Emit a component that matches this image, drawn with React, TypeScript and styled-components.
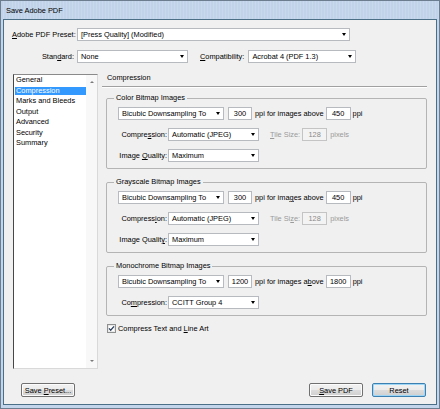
import React from "react";
import styled, { createGlobalStyle } from "styled-components";

const GlobalStyle = createGlobalStyle`
  html, body {
    margin: 0;
    padding: 0;
    background: #ffffff;
  }
  body {
    font-family: "Liberation Sans", Arial, sans-serif;
    font-size: 7.4px;
    color: #000;
  }
  * {
    box-sizing: border-box;
  }
`;

const sections = [
  "General",
  "Compression",
  "Marks and Bleeds",
  "Output",
  "Advanced",
  "Security",
  "Summary",
];

const App = () => {
  return (
    <>
      <GlobalStyle />
      <Window>
        <TitleBar>Save Adobe PDF</TitleBar>
        <Client>
          <TopRow>
            <FormLabel $w={62}>
              <U>A</U>dobe PDF Preset:
            </FormLabel>
            <Select $w={273}>[Press Quality] (Modified)</Select>
          </TopRow>
          <TopRow $mt={9}>
            <FormLabel $w={62}>
              Stan<U>d</U>ard:
            </FormLabel>
            <Select $w={111}>None</Select>
            <Txt $ml={9}>
              <U>C</U>ompatibility:
            </Txt>
            <Select $w={108} $ml={1}>
              Acrobat 4 (PDF 1.3)
            </Select>
          </TopRow>

          <Main>
            <ListBox>
              <ListItems>
                {sections.map((s) => (
                  <ListItem key={s} $selected={s === "Compression"}>
                    {s}
                  </ListItem>
                ))}
              </ListItems>
              <ScrollBar>
                <ScrollArrow />
                <ScrollArrow $down />
              </ScrollBar>
            </ListBox>

            <Panel>
              <PanelTitle>Compression</PanelTitle>
              <Separator />
              <Groups>
                <Group>
                  <Legend>Color Bitmap Images</Legend>
                  <SampleRow
                    ppi="300"
                    above="450"
                    aboveLabel={<>ppi for images above</>}
                  />
                  <FieldRow>
                    <RowLabel>
                      Compre<U>s</U>sion:
                    </RowLabel>
                    <Select $w={91}>Automatic (JPEG)</Select>
                    <TileSize label={<><U>T</U>ile Size:</>} />
                  </FieldRow>
                  <FieldRow>
                    <RowLabel>
                      Image <U>Q</U>uality:
                    </RowLabel>
                    <Select $w={91}>Maximum</Select>
                  </FieldRow>
                </Group>

                <Group>
                  <Legend>Grayscale Bitmap Images</Legend>
                  <SampleRow
                    ppi="300"
                    above="450"
                    aboveLabel={
                      <>
                        ppi for ima<U>g</U>es above
                      </>
                    }
                  />
                  <FieldRow>
                    <RowLabel>
                      Compress<U>i</U>on:
                    </RowLabel>
                    <Select $w={91}>Automatic (JPEG)</Select>
                    <TileSize label={<>Tile Si<U>z</U>e:</>} />
                  </FieldRow>
                  <FieldRow>
                    <RowLabel>
                      Image Qualit<U>y</U>:
                    </RowLabel>
                    <Select $w={91}>Maximum</Select>
                  </FieldRow>
                </Group>

                <Group>
                  <Legend>Monochrome Bitmap Images</Legend>
                  <SampleRow
                    ppi="1200"
                    above="1800"
                    aboveLabel={
                      <>
                        ppi for images a<U>b</U>ove
                      </>
                    }
                  />
                  <FieldRow>
                    <RowLabel>
                      Co<U>m</U>pression:
                    </RowLabel>
                    <Select $w={91}>CCITT Group 4</Select>
                  </FieldRow>
                </Group>
              </Groups>

              <CheckRow>
                <CheckBox />
                <span>
                  Compress Text and <U>L</U>ine Art
                </span>
              </CheckRow>
            </Panel>
          </Main>

          <Footer>
            <Button>
              Save <U>P</U>reset...
            </Button>
            <Spacer />
            <Button>
              <U>S</U>ave PDF
            </Button>
            <Button $focused>Reset</Button>
          </Footer>
        </Client>
      </Window>
    </>
  );
};

export default App;

type SampleRowProps = {
  ppi: string;
  above: string;
  aboveLabel: React.ReactNode;
};

// downsampling method + the two resolution fields
const SampleRow = ({ ppi, above, aboveLabel }: SampleRowProps) => (
  <FieldRow $indent>
    <Select $w={106}>Bicubic Downsampling To</Select>
    <Field $w={24} $ml={4}>
      {ppi}
    </Field>
    <Txt $ml={3}>{aboveLabel}</Txt>
    <Field $w={25} $ml={2}>
      {above}
    </Field>
    <Txt $ml={2}>ppi</Txt>
  </FieldRow>
);

const TileSize = ({ label }: { label: React.ReactNode }) => (
  <>
    <Txt $ml={11} $off>
      {label}
    </Txt>
    <Field $w={25} $ml={2} $off>
      128
    </Field>
    <Txt $ml={3} $off>
      pixels
    </Txt>
  </>
);

const CheckBox = () => (
  <svg width="9" height="9" viewBox="0 0 9 9">
    <rect x="0.5" y="0.5" width="8" height="8" fill="#f6f6f6" stroke="#8e8f8f" />
    <rect x="1.5" y="1.5" width="6" height="6" fill="#ffffff" stroke="#dedede" strokeWidth="0.6" />
    <path d="M2 4.4 L3.7 6.2 L7 2.4" fill="none" stroke="#2a3f5c" strokeWidth="1.3" />
  </svg>
);

const Window = styled.div`
  width: 440px;
  height: 409px;
  border: 1px solid #6c7d90;
  background: #c3d5ea;
  display: flex;
  flex-direction: column;
`;

const TitleBar = styled.div`
  height: 18px;
  padding-left: 5px;
  display: flex;
  align-items: center;
  background: repeating-linear-gradient(
    90deg,
    #c0d3e9 0,
    #c0d3e9 2px,
    #c8d9ed 2px,
    #c8d9ed 3px
  );
`;

const Client = styled.div`
  flex: 1;
  margin: 0 2px 3px;
  border: 1px solid #4b6f87;
  background: #f0f0f0;
  display: flex;
  flex-direction: column;
`;

const TopRow = styled.div<{ $mt?: number }>`
  display: flex;
  align-items: center;
  gap: 3px;
  margin: ${(p) => p.$mt ?? 8}px 0 0 8px;
`;

const FormLabel = styled.span<{ $w: number }>`
  width: ${(p) => p.$w}px;
  flex-shrink: 0;
  text-align: right;
  white-space: nowrap;
`;

const U = styled.span`
  text-decoration: underline;
`;

const Txt = styled.span<{ $ml?: number; $off?: boolean }>`
  margin-left: ${(p) => p.$ml ?? 0}px;
  white-space: nowrap;
  color: ${(p) => (p.$off ? "#9a9a9a" : "#000")};
`;

const Select = styled.div<{ $w: number; $ml?: number }>`
  position: relative;
  width: ${(p) => p.$w}px;
  height: 13px;
  margin-left: ${(p) => p.$ml ?? 0}px;
  flex-shrink: 0;
  padding-left: 3px;
  display: flex;
  align-items: center;
  white-space: nowrap;
  background: #ffffff;
  border: 1px solid #b7babf;

  &::after {
    content: "";
    position: absolute;
    right: 3px;
    top: 4px;
    border-left: 2.5px solid transparent;
    border-right: 2.5px solid transparent;
    border-top: 3px solid #000;
  }
`;

const Field = styled.div<{ $w: number; $ml?: number; $off?: boolean }>`
  width: ${(p) => p.$w}px;
  height: 13px;
  margin-left: ${(p) => p.$ml ?? 0}px;
  flex-shrink: 0;
  display: flex;
  align-items: center;
  justify-content: center;
  background: ${(p) => (p.$off ? "#f3f3f3" : "#ffffff")};
  border: 1px solid ${(p) => (p.$off ? "#c4c4c4" : "#b7babf")};
  color: ${(p) => (p.$off ? "#8a8a8a" : "#000")};
`;

const Main = styled.div`
  display: flex;
  height: 295px;
  margin-top: 11px;
`;

const ListBox = styled.div`
  width: 85px;
  height: 100%;
  margin-left: 9px;
  display: flex;
  background: #ffffff;
  border-style: solid;
  border-width: 1px;
  border-color: #8a8a8a #d9d9d9 #d9d9d9 #474747;
`;

const ListItems = styled.div`
  flex: 1;
  padding-top: 1px;
`;

const ListItem = styled.div<{ $selected?: boolean }>`
  height: 8.5px;
  line-height: 8.5px;
  margin: 0 0 2px 1px;
  padding-left: 1px;
  white-space: nowrap;
  background: ${(p) => (p.$selected ? "#3399ff" : "transparent")};
  color: ${(p) => (p.$selected ? "#ffffff" : "#000")};
`;

const ScrollBar = styled.div`
  width: 11px;
  display: flex;
  flex-direction: column;
  justify-content: space-between;
  align-items: center;
  padding: 6px 0;
  background: #f8f8f8;
`;

const ScrollArrow = styled.span<{ $down?: boolean }>`
  width: 0;
  height: 0;
  border-left: 2.5px solid transparent;
  border-right: 2.5px solid transparent;
  ${(p) =>
    p.$down ? "border-top: 2.5px solid #7a7a7a;" : "border-bottom: 2.5px solid #7a7a7a;"}
`;

const Panel = styled.div`
  width: 325px;
  margin-left: 4px;
  display: flex;
  flex-direction: column;
`;

const PanelTitle = styled.div`
  line-height: 8px;
  padding-left: 5px;
`;

const Separator = styled.div`
  margin-top: 4px;
  border-top: 1px solid #a0a0a0;
  border-bottom: 1px solid #ffffff;
`;

const Groups = styled.div`
  width: 321px;
  margin: 6px 0 0 4px;
`;

const Group = styled.fieldset`
  margin: 0;
  min-width: 0;
  padding: 5px 0 6px;
  border: 1px solid #b4b4b4;
  border-radius: 2px;

  & + & {
    margin-top: 9px;
  }
`;

const Legend = styled.legend`
  margin-left: 7px;
  padding: 0 2px;
  line-height: 8px;
  font-size: 7.4px;
`;

const FieldRow = styled.div<{ $indent?: boolean }>`
  display: flex;
  align-items: center;
  height: 13px;
  padding-left: ${(p) => (p.$indent ? 11 : 0)}px;

  & + & {
    margin-top: 8px;
  }
`;

const RowLabel = styled.span`
  width: 60px;
  margin-right: 1px;
  flex-shrink: 0;
  text-align: right;
  white-space: nowrap;
`;

const CheckRow = styled.label`
  display: flex;
  align-items: center;
  gap: 2px;
  margin: 8px 0 0 5px;
`;

const Footer = styled.div`
  display: flex;
  align-items: center;
  gap: 9px;
  margin-top: 14px;
  padding: 0 10px 0 17px;
`;

const Spacer = styled.div`
  flex: 1;
`;

const Button = styled.button<{ $focused?: boolean }>`
  width: 54px;
  height: 14px;
  padding: 0;
  font-family: inherit;
  font-size: 7.4px;
  color: #000;
  border: 1px solid ${(p) => (p.$focused ? "#3c7fb1" : "#707070")};
  border-radius: 2px;
  background: linear-gradient(#f2f2f2, #ebebeb 50%, #dddddd 50%, #cfcfcf);
  box-shadow: ${(p) =>
    p.$focused ? "inset 0 0 0 1px #9fd5f5" : "inset 0 0 0 1px #fcfcfc"};
`;
